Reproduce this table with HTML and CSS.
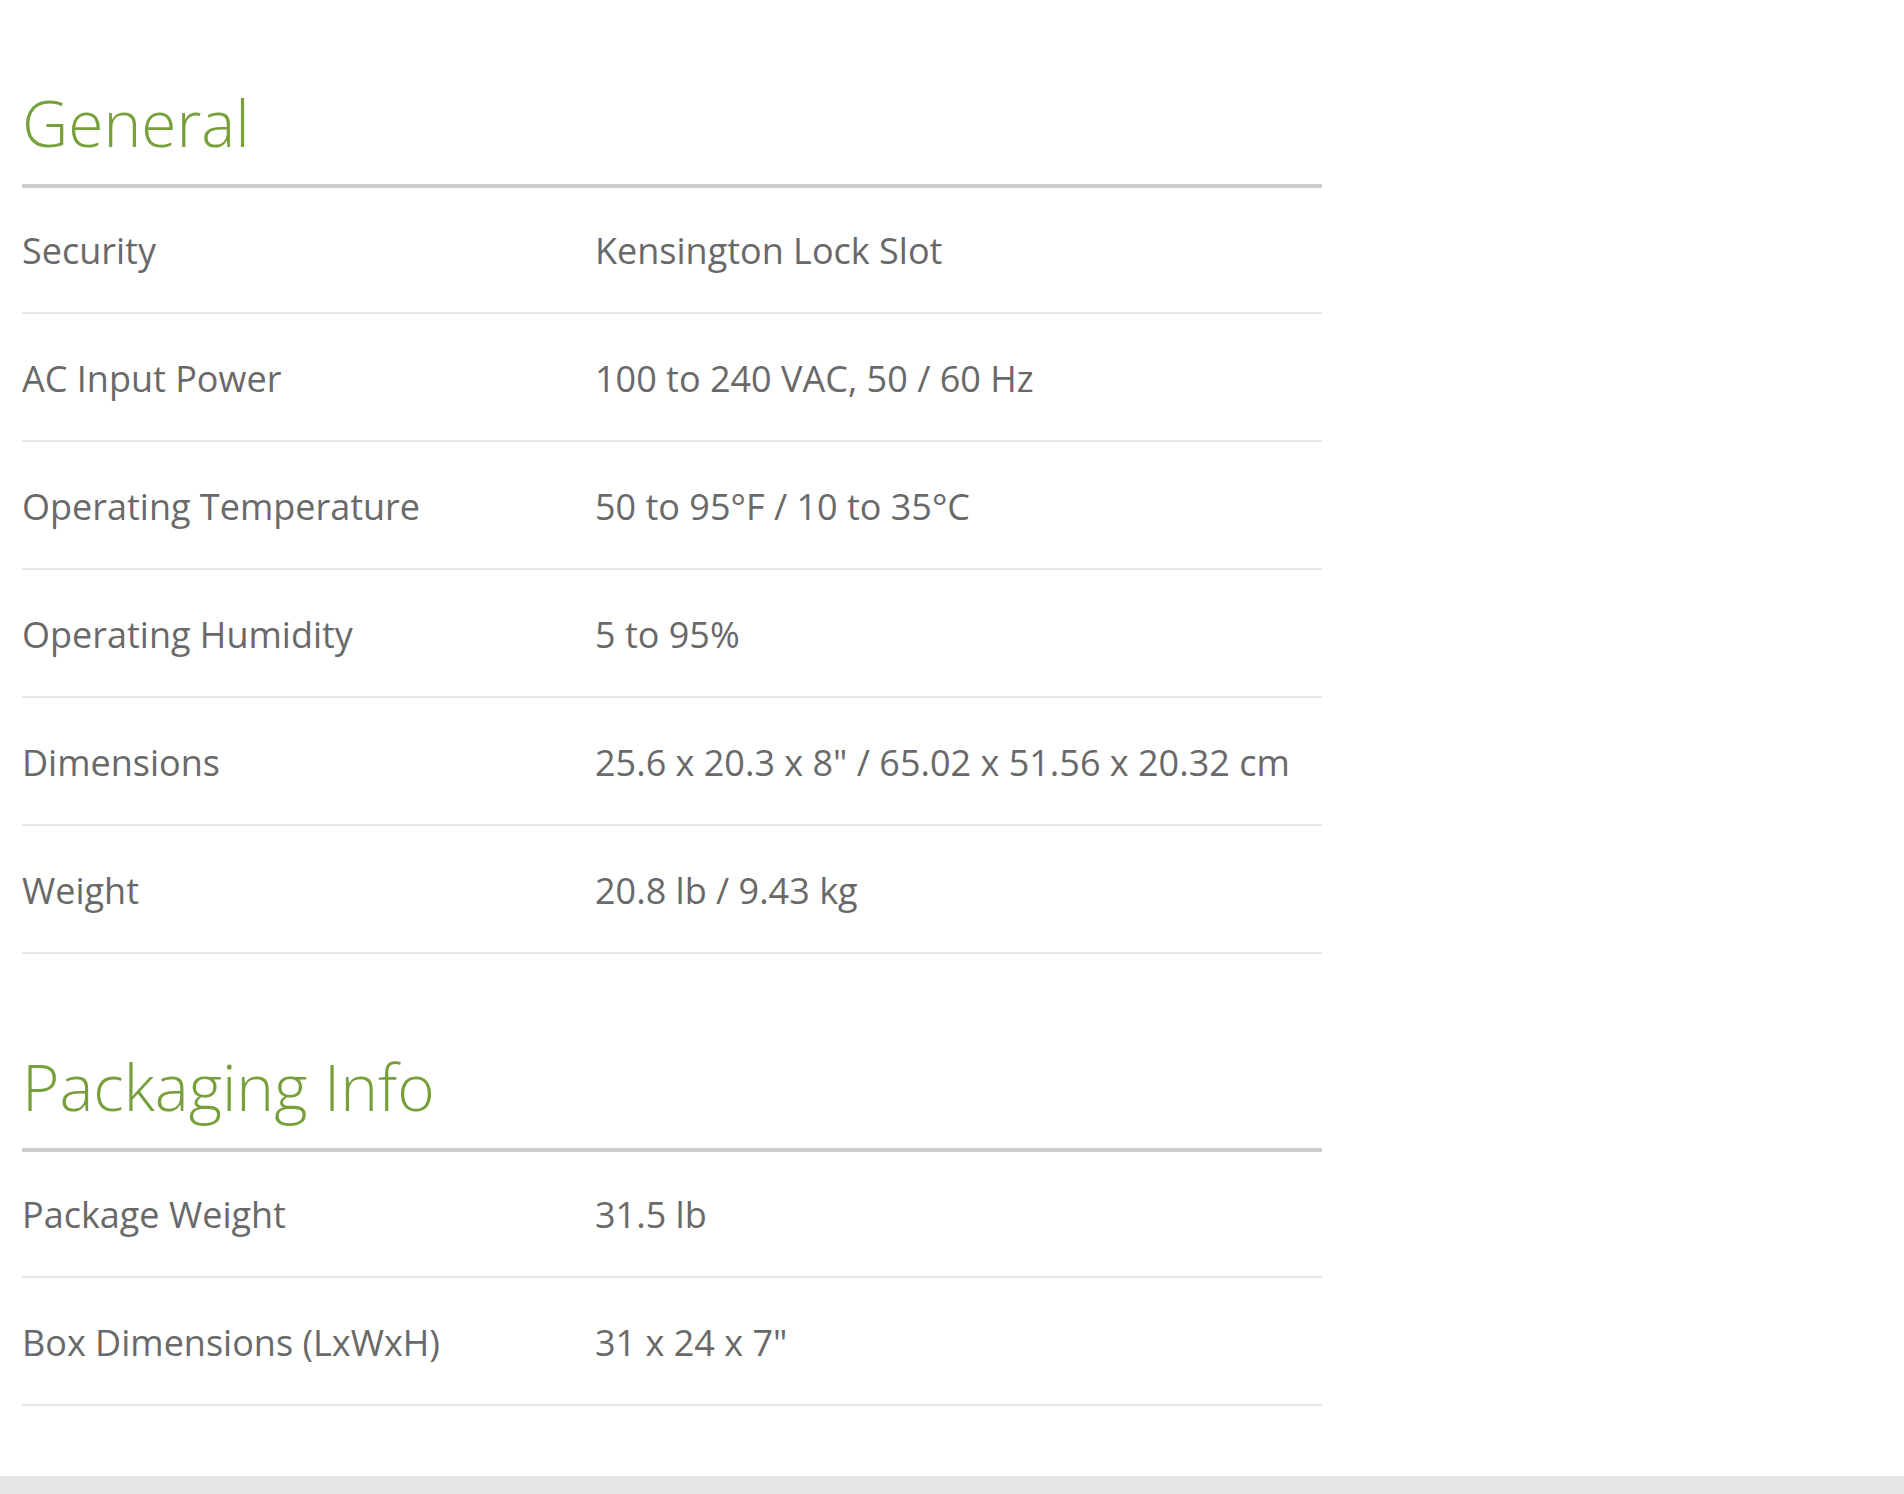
FILE: index.html
```html
<!DOCTYPE html>
<html lang="en">
<head>
<meta charset="utf-8">
<title>Specifications</title>
<link rel="stylesheet" href="styles.css">
</head>
<body>
<main class="specs">
  <section class="spec-group">
    <h2 class="spec-title">General</h2>
    <div class="spec-list">
      <div class="spec-row"><div class="spec-label">Security</div><div class="spec-value">Kensington Lock Slot</div></div>
      <div class="spec-row"><div class="spec-label">AC Input Power</div><div class="spec-value">100 to 240 VAC, 50 / 60 Hz</div></div>
      <div class="spec-row"><div class="spec-label">Operating Temperature</div><div class="spec-value">50 to 95°F / 10 to 35°C</div></div>
      <div class="spec-row"><div class="spec-label">Operating Humidity</div><div class="spec-value">5 to 95%</div></div>
      <div class="spec-row"><div class="spec-label">Dimensions</div><div class="spec-value">25.6 x 20.3 x 8" / 65.02 x 51.56 x 20.32 cm</div></div>
      <div class="spec-row"><div class="spec-label">Weight</div><div class="spec-value">20.8 lb / 9.43 kg</div></div>
    </div>
  </section>
  <section class="spec-group spec-group-next">
    <h2 class="spec-title">Packaging Info</h2>
    <div class="spec-list">
      <div class="spec-row"><div class="spec-label">Package Weight</div><div class="spec-value">31.5 lb</div></div>
      <div class="spec-row"><div class="spec-label">Box Dimensions (LxWxH)</div><div class="spec-value">31 x 24 x 7"</div></div>
    </div>
  </section>
</main>
<footer class="page-footer"></footer>
</body>
</html>
```
FILE: styles.css
```css
html, body {
  margin: 0;
  padding: 0;
  background: #ffffff;
}
body {
  font-family: "Open Sans", "Liberation Sans", sans-serif;
  color: #696969;
}
.specs {
  padding-left: 22px;
  width: 1300px;
}
.spec-group {
  display: flex;
  flex-direction: column;
}
.spec-title {
  margin: 83px 0 0 0;
  padding-bottom: 21px;
  border-bottom: 4px solid #cccccc;
  font-size: 64px;
  font-weight: 300;
  line-height: 80px;
  color: #77a03a;
}
.spec-group-next .spec-title {
  margin-top: 93px;
}
.spec-list {
  display: flex;
  flex-direction: column;
}
.spec-row {
  display: grid;
  grid-template-columns: 573px 1fr;
  padding: 41px 0 37px 0;
  border-bottom: 2px solid #e6e6e6;
  font-size: 36px;
  line-height: 48px;
}
.spec-row:first-child {
  padding-top: 39px;
}
.page-footer {
  margin-top: 70px;
  height: 18px;
  background: #e6e6e6;
}
```
